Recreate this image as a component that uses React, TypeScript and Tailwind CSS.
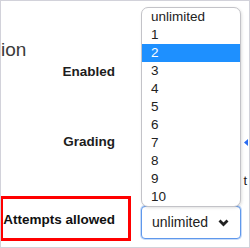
import React from 'react';

const options = ['unlimited', '1', '2', '3', '4', '5', '6', '7', '8', '9', '10'];

export default function App() {
  return (
    <div className="relative w-[250px] h-[248px] overflow-hidden bg-white border border-[#d2d2da] font-['Liberation_Sans',Arial,sans-serif]">
      {/* heading, cut off on the left */}
      <div className="mt-[37px] h-[24px] text-[19px] leading-[24px] text-[#3a3a3a]">ion</div>

      {/* Enabled */}
      <div className="flex h-[20px]">
        <div className="w-[130px] pr-[16px] text-right text-[13.5px] leading-[20px] font-bold text-[#1d1d1d]">Enabled</div>
      </div>

      {/* Grading */}
      <div className="flex h-[20px] mt-[50px]">
        <div className="w-[130px] pr-[16px] text-right text-[13.5px] leading-[20px] font-bold text-[#1d1d1d]">Grading</div>
        <div className="flex flex-1 items-center justify-end pr-[1px]">
          <svg width="4" height="7" viewBox="0 0 4 7">
            <path d="M0 3.5 L4 0 L4 7 Z" fill="#2a6cf0" />
          </svg>
        </div>
      </div>

      <div className="flex h-[44px]">
        <div className="w-[130px]" />
        <div className="flex flex-1 justify-end pt-[19px] pr-[2px] text-[13px] leading-[20px] text-[#222]">t</div>
      </div>

      {/* Attempts allowed */}
      <div className="flex h-[45px]">
        <div className="-ml-[1px] w-[131px] h-[45px] border-[3px] border-[#ff0000] flex items-center justify-end pt-[4px] pr-[13px] text-[13.5px] font-bold text-[#111]">
          Attempts allowed
        </div>
        <div className="ml-[10px] mt-[10px] w-[100px] h-[33px] rounded-[4px] border border-[#5f98ec] shadow-[0_0_0_1px_#c9dcf8] bg-white flex items-center justify-between pl-[10px] pr-[11px]">
          <span className="text-[14px] text-[#222]">unlimited</span>
          <svg width="11" height="8" viewBox="0 0 11 8">
            <path d="M1.5 1.5 L5.5 5.5 L9.5 1.5" fill="none" stroke="#222" strokeWidth="2.8" />
          </svg>
        </div>
      </div>

      {/* open dropdown list */}
      <div className="absolute left-[140px] top-[6px] w-[100px] rounded-[7px] border border-[#c3c3c8] bg-white shadow-[1px_1px_3px_rgba(0,0,0,0.12)] overflow-hidden">
        {options.map((o) => (
          <div
            key={o}
            className={
              o === '2'
                ? 'h-[18px] pl-[9px] text-[13.5px] leading-[18px] bg-[#1e90ff] text-white'
                : 'h-[18px] pl-[9px] text-[13.5px] leading-[18px] text-[#222]'
            }
          >
            {o}
          </div>
        ))}
      </div>
    </div>
  );
}
